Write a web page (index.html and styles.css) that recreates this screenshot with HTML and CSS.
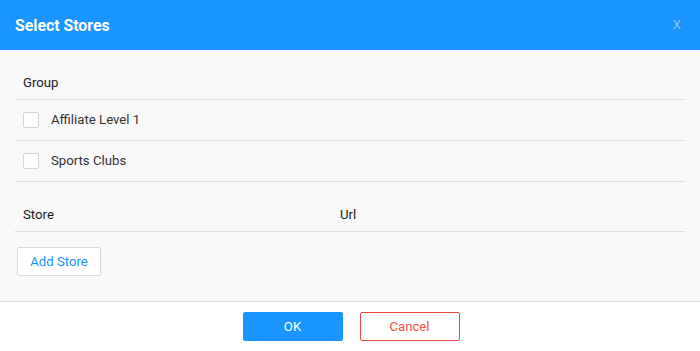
FILE: index.html
```html
<!DOCTYPE html>
<html>
<head>
<meta charset="utf-8">
<link rel="stylesheet" href="styles.css">
</head>
<body>
<div class="modal">
  <div class="modal-header">
    <span class="modal-title">Select Stores</span>
    <span class="modal-close">X</span>
  </div>
  <div class="modal-body">
    <div class="table">
      <div class="thead-row">Group</div>
      <div class="row"><span class="checkbox"></span><span class="label">Affiliate Level 1</span></div>
      <div class="row"><span class="checkbox"></span><span class="label">Sports Clubs</span></div>
    </div>
    <div class="table store-table">
      <div class="thead-row cols"><span>Store</span><span>Url</span></div>
    </div>
    <button class="btn btn-default">Add Store</button>
  </div>
  <div class="modal-footer">
    <button class="btn btn-primary">OK</button>
    <button class="btn btn-danger">Cancel</button>
  </div>
</div>
</body>
</html>
```

FILE: styles.css
```css
* { box-sizing: border-box; }
html, body { margin: 0; padding: 0; }
body {
  width: 700px;
  height: 351px;
  font-family: Roboto, "Liberation Sans", Arial, sans-serif;
  font-size: 13.2px;
  color: #222;
  background: #fff;
  overflow: hidden;
}
.modal {
  display: flex;
  flex-direction: column;
  height: 351px;
}
.modal-header {
  height: 50px;
  background: #1a94ff;
  display: flex;
  align-items: center;
  justify-content: space-between;
  padding: 0 19px 0 15px;
}
.modal-title {
  color: #fff;
  font-weight: 700;
  font-size: 15.8px;
  margin-top: 1px;
}
.modal-close {
  color: #86c6ff;
  font-size: 13px;
  margin-top: -2px;
}
.modal-body {
  background: #f9f9f9;
  padding: 15px 15px 25px 15px;
  border-bottom: 1px solid #dddddd;
  height: 252px;
}
.table { width: 670px; }
.thead-row {
  height: 35px;
  line-height: 35px;
  padding: 0 8px;
  border-bottom: 1px solid #dddddd;
  color: #1a1a1a;
}
.cols {
  display: grid;
  grid-template-columns: 317px 1fr;
}
.row {
  height: 41px;
  display: flex;
  align-items: center;
  padding: 0 8px;
  border-bottom: 1px solid #dddddd;
  color: #333;
}
.checkbox {
  width: 16px;
  height: 16px;
  border: 1px solid #d4d4d4;
  border-radius: 2px;
  background: #fff;
  margin-right: 12px;
  margin-top: -1px;
}
.label { line-height: 16px; }
.store-table { margin-top: 15px; }
.btn {
  font-family: Roboto, "Liberation Sans", Arial, sans-serif;
  font-size: 13.2px;
  height: 29px;
  border-radius: 2px;
  cursor: pointer;
  padding: 0;
}
.btn-default {
  margin: 15px 0 0 2px;
  width: 84px;
  background: #fff;
  border: 1px solid #d9d9d9;
  color: #1a94ff;
}
.modal-footer {
  flex: 1;
  display: flex;
  justify-content: center;
  gap: 17px;
  padding: 10px 0 0 2px;
}
.btn-primary {
  width: 100px;
  background: #1a94ff;
  border: 1px solid #1a94ff;
  color: #fff;
}
.btn-danger {
  width: 100px;
  background: #fff;
  border: 1px solid #e8463c;
  color: #ee5045;
}
```
